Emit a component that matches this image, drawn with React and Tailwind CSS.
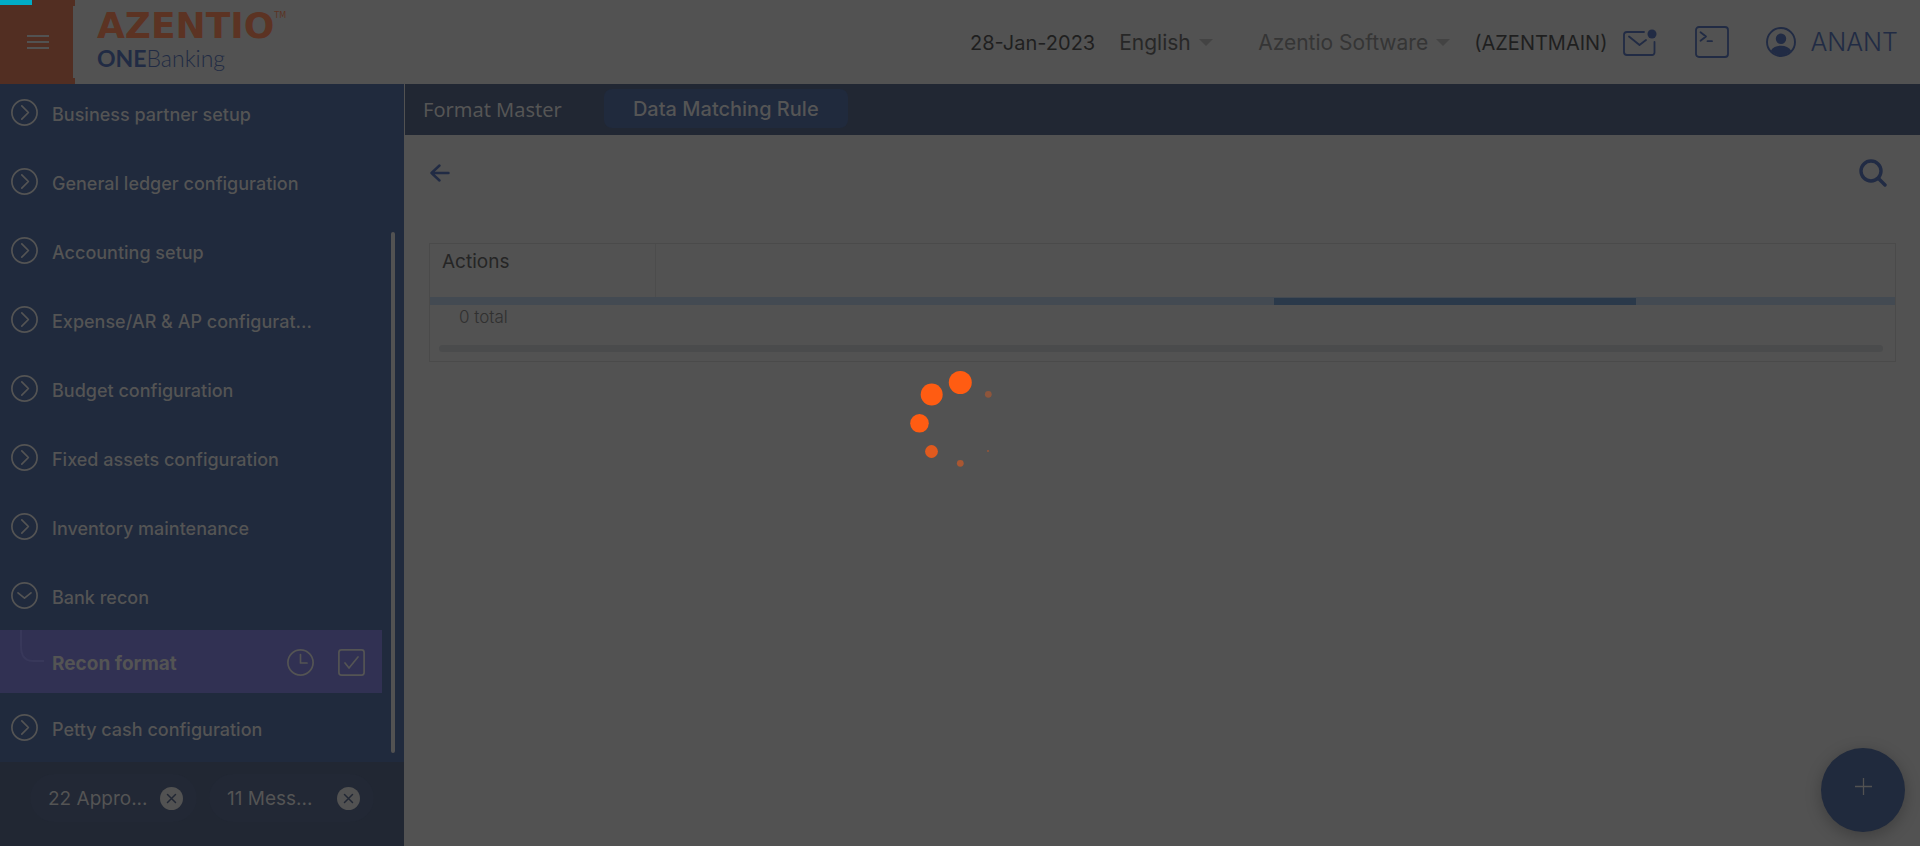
import React from "react";

const menu = [
  "Business partner setup",
  "General ledger configuration",
  "Accounting setup",
  "Expense/AR & AP configurat...",
  "Budget configuration",
  "Fixed assets configuration",
  "Inventory maintenance",
];

const dots = [
  [50.3, 9.5, 11.5, 1],
  [21.7, 21.5, 11, 1],
  [9.5, 50.3, 9.3, 1],
  [21.5, 78.5, 6.4, 0.82],
  [50.3, 90.3, 3.4, 0.5],
  [78, 78, 1, 0.4],
  [78.3, 21.3, 3.4, 0.35],
];

function CircleChevron({ open }) {
  return (
    <svg className="size-[27px] shrink-0" viewBox="0 0 27 27" fill="none" stroke="currentColor" strokeWidth="1.7" strokeLinecap="round" strokeLinejoin="round" aria-hidden="true">
      <circle cx="13.5" cy="13.5" r="12.6" />
      <path d={open ? "M7 10.8l6.5 5.4 6.5-5.4" : "M10.8 6.8l6.6 6.7-6.6 6.7"} />
    </svg>
  );
}

function MenuItem({ label, open = false }) {
  return (
    <li>
      <button type="button" aria-expanded={open} className="flex h-[69px] w-full items-center gap-[14px] pl-[11px] text-left">
        <CircleChevron open={open} />
        <span className="pt-1">{label}</span>
      </button>
    </li>
  );
}

function Picker({ label, value, className }) {
  return (
    <div className="flex items-center gap-2">
      <select aria-label={label} className={"h-9 appearance-none bg-transparent pt-0.5 text-[21px] leading-8 outline-none " + className} defaultValue={value}>
        <option>{value}</option>
      </select>
      <svg className="h-[7px] w-[14px]" viewBox="0 0 14 7" aria-hidden="true">
        <path d="M0 0h14L7 7z" fill="#434343" />
      </svg>
    </div>
  );
}

function Chip({ label, className }) {
  return (
    <div className={"flex h-12 items-center justify-between rounded-full bg-[#222835] pr-[14px] pl-[18px] " + className}>
      <span className="pt-0.5">{label}</span>
      <button type="button" aria-label={"Dismiss " + label}>
        <svg className="size-[23px]" viewBox="0 0 23 23" aria-hidden="true">
          <circle cx="11.5" cy="11.5" r="11.5" fill="#525252" />
          <path d="M7.5 7.5l8 8m0-8l-8 8" stroke="#212734" strokeWidth="1.5" strokeLinecap="round" />
        </svg>
      </button>
    </div>
  );
}

function Header() {
  return (
    <header className="flex h-[84px] shrink-0 items-center">
      <button type="button" aria-label="Toggle menu" className="relative flex h-full w-[75px] shrink-0 items-center bg-[#522e22] pl-[26px] after:absolute after:inset-y-1.5 after:right-0 after:w-0.5 after:bg-[#525252]">
        <svg className="h-4 w-6" viewBox="0 0 24 16" stroke="#525252" strokeWidth="2" aria-hidden="true">
          <path d="M1 2h22M1 8h22M1 14h22" />
        </svg>
      </button>
      <div className="ml-[22px] flex flex-col pb-1">
        <div className="flex items-start font-['DejaVu_Sans',sans-serif] text-[#5c3323]">
          <span className="text-[36px] leading-9 font-bold">AZENTIO</span>
          <span className="text-[8px] leading-4">TM</span>
        </div>
        <div className="font-[Lato,sans-serif] text-[23px] leading-7 font-light text-[#212b44]">
          <b className="font-bold">ONE</b>Banking
        </div>
      </div>
      <div className="ml-auto flex items-center pr-[22px]">
        <span className="pt-0.5 text-xl text-[#1f1f1f]">28-Jan-2023</span>
        <div className="ml-6">
          <Picker label="Language" value="English" className="text-[#272727]" />
        </div>
        <div className="ml-[45px]">
          <Picker label="Company" value="Azentio Software" className="text-[#353535]" />
        </div>
        <span className="ml-6 pt-0.5 text-xl text-[#1f1f1f]">(AZENTMAIN)</span>
        <button type="button" aria-label="Messages" className="ml-4 pt-0.5">
          <svg className="h-7 w-[34px]" viewBox="0 0 34 28" fill="none" stroke="#212b44" strokeWidth="1.8" strokeLinecap="round" strokeLinejoin="round" aria-hidden="true">
            <path d="M21 3H4a3 3 0 0 0-3 3v17a3 3 0 0 0 3 3h25a2.500 2.500 0 0 0 2.500-2.500V13" />
            <path d="M6 7.500l10.500 8.500 6.500-5" />
            <circle cx="29" cy="5" r="4.500" fill="#212b44" stroke="none" />
          </svg>
        </button>
        <button type="button" aria-label="Console" className="ml-[38px]">
          <svg className="h-8 w-[34px]" viewBox="0 0 34 32" fill="none" stroke="#212b44" strokeWidth="1.8" strokeLinecap="round" strokeLinejoin="round" aria-hidden="true">
            <rect x="1" y="1" width="32" height="30" rx="3" />
            <path d="M5.500 6.200l5.500 4.300-5.500 4.300M12.500 15.200h4.500" />
          </svg>
        </button>
        <button type="button" className="ml-[37px] flex items-center gap-[14px] text-[#212b44]">
          <svg className="size-[30px]" viewBox="0 0 30 30" aria-hidden="true">
            <circle cx="15" cy="15" r="14" fill="none" stroke="currentColor" strokeWidth="1.9" />
            <circle cx="15" cy="11.800" r="5.200" fill="currentColor" />
            <path d="M5 23.500c2-3.200 5.500-4.800 10-4.800s8 1.600 10 4.800c-2.500 3.300-6 5-10 5s-7.500-1.700-10-5z" fill="currentColor" />
          </svg>
          <span className="text-[25px] leading-8 font-light">ANANT</span>
        </button>
      </div>
    </header>
  );
}

function Sidebar() {
  return (
    <nav className="flex w-[405px] shrink-0 flex-col border-r border-[#525252] bg-[#202a3d] text-lg leading-6 font-medium text-[#545454]">
      <div className="flex min-h-0 flex-1 overflow-hidden">
        <ul className="flex w-[382px] flex-col justify-end">
          {menu.map((m) => (
            <MenuItem key={m} label={m} />
          ))}
          <MenuItem label="Bank recon" open />
          <li className="flex h-[63px] shrink-0 items-center bg-[#313153] pt-0.5 pr-[17px] text-[19px] font-bold">
            <svg className="mr-2 mb-0.5 ml-5 h-[63px] w-6 shrink-0" viewBox="0 0 24 63" fill="none" stroke="#38385a" strokeWidth="2" aria-hidden="true">
              <path d="M1 0v16q0 15 12 15h11" />
            </svg>
            <a href="#recon-format" className="pt-0.5">Recon format</a>
            <button type="button" aria-label="Pending" className="ml-auto">
              <svg className="size-[27px]" viewBox="0 0 27 27" fill="none" stroke="currentColor" strokeWidth="1.7" strokeLinecap="round" strokeLinejoin="round" aria-hidden="true">
                <circle cx="13.500" cy="13.500" r="12.600" />
                <path d="M13.500 5.500v8.500h6.500" />
              </svg>
            </button>
            <button type="button" aria-label="Approve" className="ml-6">
              <svg className="size-[27px]" viewBox="0 0 27 27" fill="none" stroke="currentColor" strokeWidth="1.700" strokeLinecap="round" strokeLinejoin="round" aria-hidden="true">
                <rect x="0.900" y="0.900" width="25.200" height="25.200" rx="2.500" />
                <path d="M7 14l4 5 9-11" />
              </svg>
            </button>
          </li>
          <MenuItem label="Petty cash configuration" />
        </ul>
        <div className="mt-[148px] mb-[9px] ml-[9px] w-1 rounded-full bg-[#525252]" />
      </div>
      <div className="flex h-[84px] shrink-0 items-start gap-3 bg-[#212733] pt-3 pl-[30px] text-[19px] font-normal">
        <Chip label="22 Appro..." className="w-[167px]" />
        <Chip label="11 Mess..." className="w-[165px]" />
      </div>
    </nav>
  );
}

function Results() {
  return (
    <section className="mx-6 mt-[56px] border border-[#4a4a4a]">
      <table className="w-full border-collapse">
        <thead>
          <tr className="h-[53px]">
            <th className="w-[225px] border-r border-[#4c4c4c] px-3 pt-1 text-left align-top text-[19px] leading-7 font-normal text-[#252525]">Actions</th>
            <th aria-label="Details" />
          </tr>
        </thead>
      </table>
      <div role="progressbar" aria-label="Loading rows" className="flex h-2 bg-[#434a52] pt-px">
        <div className="ml-[57.6%] w-[24.7%] bg-[#2a394a]" />
      </div>
      <p className="pl-[29px] text-[17px] leading-6 font-light text-[#303030]">0 total</p>
      <div className="mt-4 mr-3 mb-[9px] ml-[9px] h-[7px] rounded-full bg-[#4a4b4c]" />
    </section>
  );
}

export default function App() {
  return (
    <div className="relative flex h-screen flex-col overflow-hidden bg-[#525252] font-[Inter,sans-serif]">
      <Header />
      <div className="flex min-h-0 flex-1">
        <Sidebar />
        <main className="flex min-w-0 flex-1 flex-col">
          <div role="tablist" className="flex h-[51px] shrink-0 items-center bg-[#212733] pl-[18px] text-xl text-[#555]">
            <button type="button" role="tab" className="font-['Noto_Sans',sans-serif]">Format Master</button>
            <button type="button" role="tab" aria-selected="true" className="mb-0.5 ml-[42px] h-[39px] w-[244px] rounded-lg bg-[#202a3d] font-medium">Data Matching Rule</button>
          </div>
          <div className="mt-6 flex h-7 items-center justify-between pr-[33px] pl-[25px]">
            <button type="button" aria-label="Back">
              <svg className="h-[18px] w-5" viewBox="0 0 20 18" fill="none" stroke="#212b44" strokeWidth="2.400" strokeLinecap="round" strokeLinejoin="round" aria-hidden="true">
                <path d="M18.500 9H1.500M9.500 1.500L1.500 9l8 7.500" />
              </svg>
            </button>
            <button type="button" aria-label="Search">
              <svg className="size-7" viewBox="0 0 28 28" fill="none" stroke="#212b44" strokeWidth="3.400" strokeLinecap="round" aria-hidden="true">
                <circle cx="12" cy="12" r="10" />
                <path d="M19.500 19.500l6.500 6.500" />
              </svg>
            </button>
          </div>
          <Results />
        </main>
      </div>
      <button type="button" aria-label="Add" className="absolute right-[15px] bottom-[14px] flex size-[84px] items-center justify-center rounded-full bg-[#202a3d] pb-2 shadow-[0_4px_16px_rgba(0,0,0,0.25)]">
        <svg className="size-[17px]" viewBox="0 0 17 17" stroke="#525252" strokeWidth="1.300" aria-hidden="true">
          <path d="M8.500 0v17M0 8.500h17" />
        </svg>
      </button>
      <div className="pointer-events-none absolute inset-0 flex items-center justify-center" role="status" aria-label="Loading">
        <svg className="size-[100px] overflow-visible" viewBox="0 0 100 100" fill="#ff5c12" aria-hidden="true">
          {dots.map(([x, y, r, o], i) => (
            <circle key={i} cx={x} cy={y} r={r} opacity={o} />
          ))}
        </svg>
      </div>
      <div className="absolute top-0 left-0 h-[5px] w-8 bg-[#00acc6]" />
    </div>
  );
}
